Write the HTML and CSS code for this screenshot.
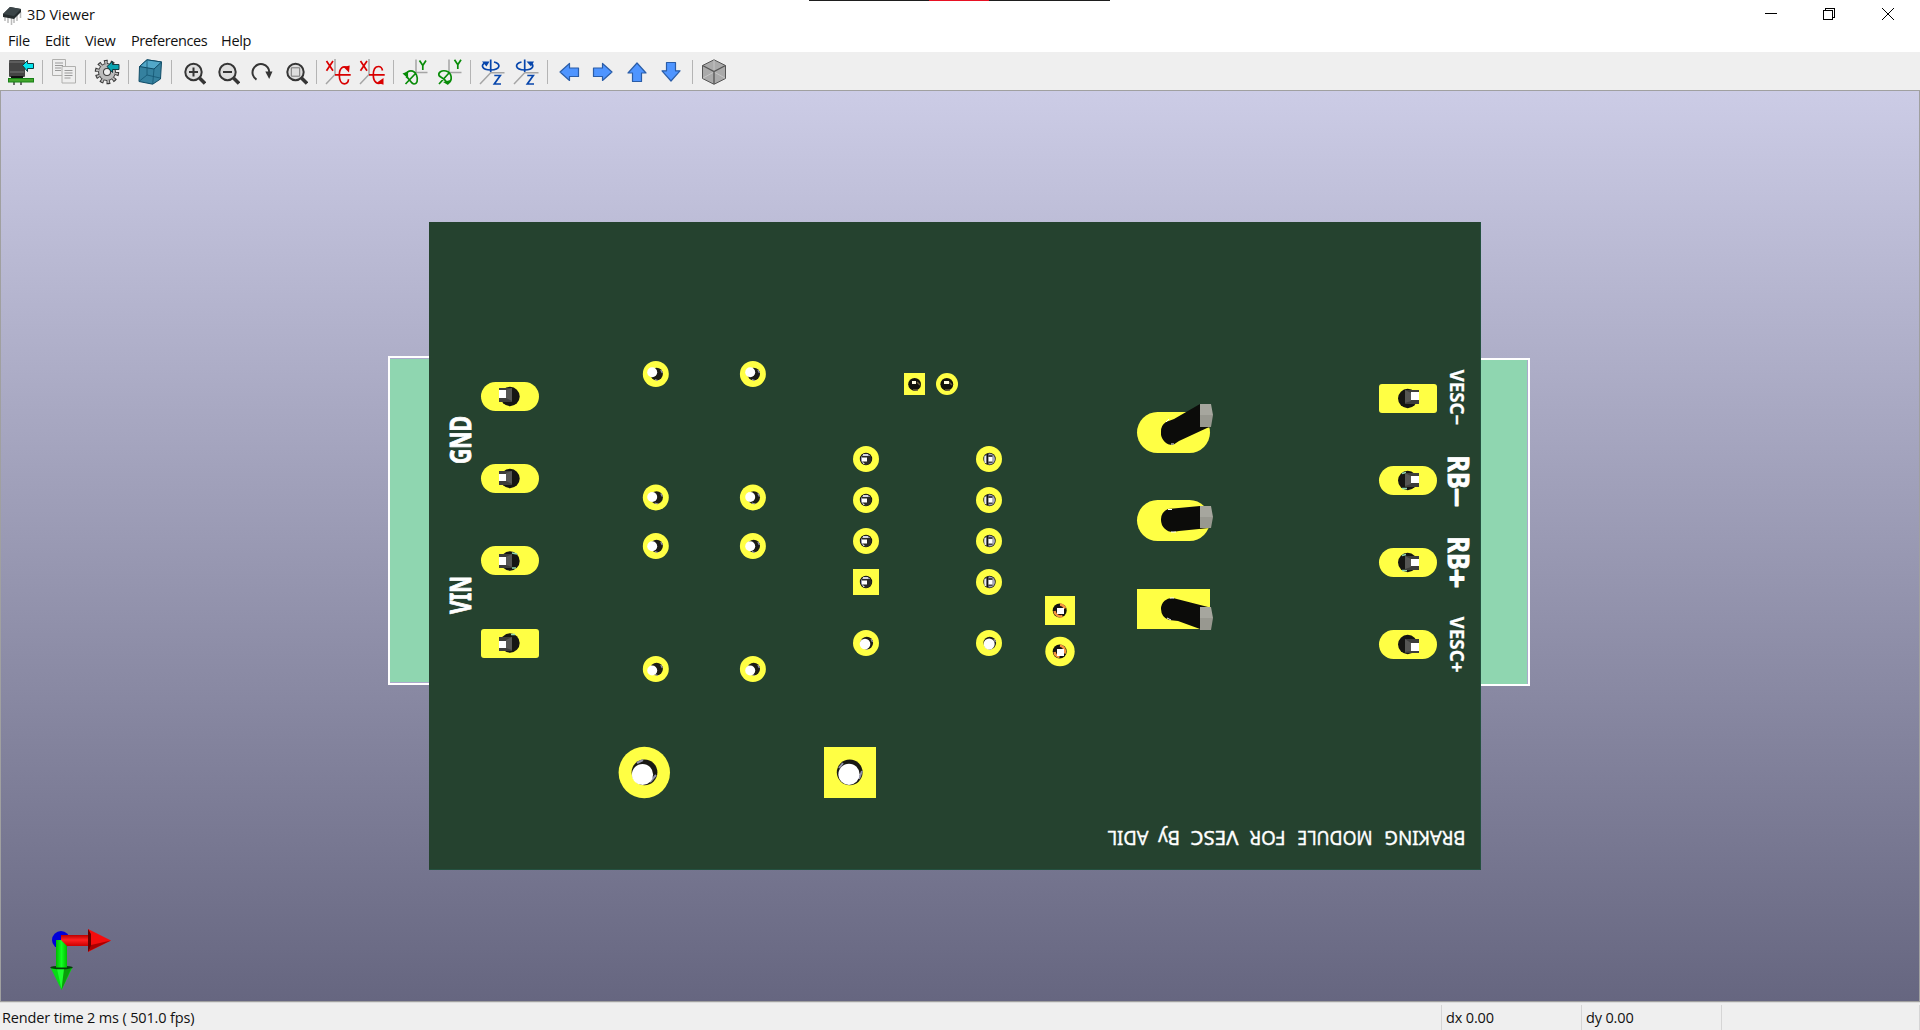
FILE: index.html
```
<!DOCTYPE html>
<html lang="en">
<head>
<meta charset="utf-8">
<title>3D Viewer</title>
<link rel="stylesheet" href="styles.css">
</head>
<body>
<div class="window">
  <div class="capture-bar"></div>
  <header class="titlebar">
    <svg class="app-icon" width="20" height="20" viewBox="0 0 20 20">
      <path d="M3 11v5M6 12v6M9.500 13v7M12 13v5M15 10v6M18.500 7v6" stroke="#bbb" stroke-width="1.500"/>
      <path d="M1 9L8 2L19 4V7L12 14L1 12Z" fill="#252c2e"/>
      <path d="M1 9L8 2L19 4L12 11Z" fill="#3b4548"/>
    </svg>
    <span class="title">3D Viewer</span>
    <svg class="caption-buttons" width="132" height="14" viewBox="0 0 132 14" shape-rendering="crispEdges">
      <path d="M1 6.500h12M59.500 3.500h9v9h-9zM61.500 3V1.500h9v9H69" fill="none" stroke="#000"/>
      <path d="M118 1l12 12M130 1l-12 12" stroke="#000" shape-rendering="auto"/>
    </svg>
  </header>
  <nav class="menubar"><span class="file">File</span><span class="edit">Edit</span><span class="view">View</span><span class="prefs">Preferences</span><span>Help</span></nav>
  <div class="toolbar">
    <div class="tool"><svg viewBox="0 0 26 26"><path d="M6 22v4M13 22v4" stroke="#444" stroke-width="1.500"/><rect x="1" y="1" width="16" height="17" rx="1" fill="#444"/><path d="M1 3h16M2 13h14" stroke="#777"/><path d="M3 18h12" stroke="#111" stroke-width="2"/><rect x=".5" y="19.500" width="25" height="3.500" fill="#43a52c" stroke="#178017"/><path d="M14.500 6.500l5-5v3h6v5h-6v3z" fill="#06e5ee" stroke="#103b40"/></svg></div>
    <i class="sep"></i>
    <div class="tool"><svg viewBox="0 0 26 26"><g fill="#eee" stroke="#b0b0ae"><path d="M1.500.5h13v16h-13z"/><path d="M11 7.500h13.500v16.500H11z"/></g><path d="M4 4h8M4 6.500h8M4 9h6M4 11.500h6M13.500 11.500h8M13.500 14h8M13.500 16.500h8M13.500 19h6" stroke="#999" stroke-width="1.200"/></svg></div>
    <i class="sep"></i>
    <div class="tool"><svg viewBox="0 0 26 26"><circle cx="13" cy="13" r="10.200" fill="none" stroke="#3a3a3a" stroke-width="4" stroke-dasharray="3.600 2.809"/><circle cx="13" cy="13" r="6" fill="none" stroke="#3a3a3a" stroke-width="6"/><circle cx="13" cy="13" r="6" fill="none" stroke="#bbb" stroke-width="4"/><circle cx="13" cy="13" r="9.500" fill="none" stroke="#bbb" stroke-width="3.200" stroke-dasharray="1.700 4.269" stroke-dashoffset="-.8"/><path d="M13 7.500l5.500-5v3H25v5h-6.500v3z" fill="#08a3b0" stroke="#123b42"/></svg></div>
    <i class="sep"></i>
    <div class="tool"><svg viewBox="0 0 26 26"><path d="M10 .8L24.500 3L23.500 20L15.700 25.200L2 22.500L2.500 7.500Z" fill="#35819f" stroke="#104b66"/><path d="M10 .8L24.500 3L17 10L2.500 7.500Z" fill="#52a7c8" stroke="#104b66"/><path d="M17 10l-1.300 15M10 1v15L2.500 22M10 16l13 3" fill="none" stroke="#145572" stroke-width=".8"/></svg></div>
    <i class="sep"></i>
    <div class="tool"><svg viewBox="0 0 26 26"><circle cx="13.500" cy="13" r="8.200" class="lens"/><path d="M19.500 19l5.500 5.500" class="handle"/><path d="M9 13h9M13.500 8.500v9" class="mark"/></svg></div>
    <div class="tool"><svg viewBox="0 0 26 26"><circle cx="13.500" cy="13" r="8.200" class="lens"/><path d="M19.500 19l5.500 5.500" class="handle"/><path d="M9 13h9" class="mark"/></svg></div>
    <div class="tool"><svg viewBox="0 0 26 26"><path d="M8.500 20.600A8.400 8.400 0 1 1 21.300 14" class="lens"/><path d="M17.300 12.500h7.200l-3.300 7.500z" fill="#353535"/></svg></div>
    <div class="tool"><svg viewBox="0 0 26 26"><circle cx="13.500" cy="13" r="8.200" class="lens"/><path d="M19.500 19l5.500 5.500" class="handle"/><path d="M9.300 8.800h8.400v8.400H9.300z" fill="#ddd" stroke="#777"/></svg></div>
    <i class="sep"></i>
    <div class="tool"><svg viewBox="0 0 26 26"><path d="M10 0v15.500L1 25" class="axis"/><g class="red"><path d="M1.500 2l6.500 9.800M8 2L1.500 11.800M10 15.800H25.700M22.500 9C18 6 14.300 9.500 14.300 16c0 6 2.200 8.800 5 8.800 2.700 0 4-1.800 4.200-4.500"/><path d="M18.500 8l6.200-1.500-.7 7z" fill="#d90000" stroke="none"/></g></svg></div>
    <div class="tool"><svg viewBox="0 0 26 26"><path d="M10 0v15.500L1 25" class="axis"/><g class="red"><path d="M1.500 2l6.500 9.800M8 2L1.500 11.800M10 15.800H25.700M23.500 11.500C23 8.800 21.500 7.500 19.500 7.500c-3 0-5.200 3-5.200 8.500 0 7 4 9.800 8.200 7.500"/><path d="M18 23.500l6.500-4.500v6.700z" fill="#d90000" stroke="none"/></g></svg></div>
    <i class="sep"></i>
    <div class="tool"><svg viewBox="0 0 26 26"><path d="M14 .5v13h11.500" class="axis"/><g class="green"><path d="M17.500 1.500l3.300 5 3.200-5M20.800 6.500V11M3.500 25L14 14M3 16C6 10.500 12 10.500 14.500 16c2 5 .5 9-2.500 9-3 0-4-5-8-7.500"/><path d="M.5 14.500l5.500-2 .2 7z" fill="#088c08" stroke="none"/></g></svg></div>
    <div class="tool"><svg viewBox="0 0 26 26"><path d="M13 .5v13h12.500" class="axis"/><g class="green"><path d="M18.500.8l3.300 5 3.200-5M21.800 5.800V10M3 25L13 14M12 24.500c5-3 4-11-2-12.500-4.500-1-8 1.500-7 4.500 1 2 4.500 1.500 8 7"/><path d="M7 23l7.500-2-2.500 5z" fill="#088c08" stroke="none"/></g></svg></div>
    <i class="sep"></i>
    <div class="tool"><svg viewBox="0 0 26 26"><path d="M1 25L11.700 13.700H25.500" class="axis"/><g class="blue"><path d="M11.700.5v12.500M15 3c7.500 1.500 6.500 7.800-3.300 8C2.500 11 1.500 6 6.500 3.500M15.300 16.500h6l-6 8.500h6.700"/><path d="M3 2.500h7.500L7.500 7.500z" fill="#0746ac" stroke="none"/></g></svg></div>
    <div class="tool"><svg viewBox="0 0 26 26"><path d="M1 25L11.700 13.700H25.500" class="axis"/><g class="blue"><path d="M11.700.5v12.500M8.500 3c-7.500 1.500-6.500 7.800 3.200 8C20.500 11 22 6 17 3.500M14.300 16.500h6l-6 8.500h6.700"/><path d="M21 2.500h-7.500l4.500 5z" fill="#0746ac" stroke="none"/></g></svg></div>
    <i class="sep"></i>
    <div class="tool"><svg viewBox="0 0 26 26"><path d="M4 13l9.500-8.500v4.500h9v8.500h-9v4z" class="arrow"/></svg></div>
    <div class="tool"><svg viewBox="0 0 26 26"><path d="M22 13l-9.500-8.500v4.500h-9v8.500h9v4z" class="arrow"/></svg></div>
    <div class="tool"><svg viewBox="0 0 26 26"><path d="M13 4l9 10h-4.500v8.500h-9V14H4z" class="arrow"/></svg></div>
    <div class="tool"><svg viewBox="0 0 26 26"><path d="M13 22l9-10.200h-4.500V3.500h-9v8.300H4z" class="arrow"/></svg></div>
    <i class="sep"></i>
    <div class="tool"><svg viewBox="0 0 26 26"><path d="M13 .8l11.500 5.700v13L13 25.300 1.500 19.500v-13z" fill="#aaa" stroke="#555"/><path d="M13 1v12L2 19M13 13l11 6" fill="none" stroke="#c5c5c5"/><path d="M1.500 6.500L13 12.500l11.500-6M13 12.500V25" fill="none" stroke="#555" stroke-width="1.300"/></svg></div>
  </div>
  <main class="canvas">
    <svg class="scene" viewBox="1 91 1918 910">
      <defs>
        <linearGradient id="redShaft" x2="0" y2="1"><stop stop-color="#b00"/><stop offset=".45" stop-color="#f22"/><stop offset="1" stop-color="#c00"/></linearGradient>
        <linearGradient id="greenShaft"><stop stop-color="#0b0"/><stop offset=".5" stop-color="#1f2"/><stop offset="1" stop-color="#0b0"/></linearGradient>
        <g id="ring"><circle r="13" fill="#ffff44"/><circle cx=".8" r="6.300" fill="#1c1c16"/><path d="M-1 5.500l3 1M5 -4l1.500 3" stroke="#8f8fa8" stroke-width="1.300"/></g>
        <g id="dipHoleA"><circle r="6.200" fill="#111"/><circle r="5.200" fill="#9b9bb4"/><path d="M-3 -5h5v10h-5z" fill="#d5d5e0"/><path d="M-4-3h9v6l-2 2h-4l-3-3z" fill="#2a2a28"/><path d="M-4-1.500h5v4H-4z" fill="#fff"/></g>
        <g id="dipHoleB"><circle r="6.200" fill="#111"/><circle r="5.500" fill="#a5a5bd"/><path d="M-5-3h2v7h-2z" fill="#eee"/><path d="M-3-5h2v10h-2z" fill="#111"/><path d="M-1-4h4v8h-4z" fill="#444"/><path d="M-1-2h4v4.500h-4z" fill="#fff"/></g>
      </defs>
      <g class="connectors" shape-rendering="crispEdges">
        <rect x="389" y="357" width="60" height="327"/>
        <rect x="1460" y="359" width="69" height="326"/>
        <path d="M390 358.500h40M390 682.500h40M1527.500 360v324" stroke="#aaaacb" stroke-width="1"/>
      </g>
      <rect x="429" y="222" width="1052" height="648" fill="#25422f"/>
      <path d="M429 869.500h1051.500V222" fill="none" stroke="#24503f"/>

      <g class="pads">
        <rect x="481" y="382" width="58" height="29" rx="14.500"/><rect x="481" y="464" width="58" height="29" rx="14.500"/><rect x="481" y="546" width="58" height="29" rx="14.500"/><rect x="481" y="629" width="58" height="29" rx="3"/>
        <rect x="1379" y="384" width="58" height="29" rx="3"/><rect x="1379" y="466" width="58" height="29" rx="14.500"/><rect x="1379" y="548" width="58" height="29" rx="14.500"/><rect x="1379" y="630" width="58" height="29" rx="14.500"/>
      </g>
      <g fill="#151513"><circle cx="510" cy="396.500" r="9.700"/><circle cx="510" cy="478.500" r="9.700"/><circle cx="510" cy="561" r="9.700"/><circle cx="510" cy="643" r="9.700"/><circle cx="1407.700" cy="398.500" r="9.700"/><circle cx="1407.700" cy="480.500" r="9.700"/><circle cx="1407.700" cy="562.500" r="9.700"/><circle cx="1407.700" cy="644.500" r="9.700"/></g>
      <path d="M512 553l5 1M512 568l4 0M511 634.500h4M1402 473.500l4-1M1402 488.500h5M1402 555.500l4-1M1402 570.500h5" stroke="#8fd6b0" stroke-width="1.600"/>
      <path d="M499 388h13v14h-13zM499 471h13v14h-13zM499 554h13v14h-13zM499 637h13v14h-13zM1405 390h14v14h-14zM1405 473h14v14h-14zM1405 556h14v14h-14zM1405 639h14v14h-14z" fill="#3d3d3b"/>
      <path d="M506 390l6-2v13l-6-3zM506 473l6-2v13l-6-3zM506 557l6-3v13l-6-2zM506 640l6-3v13l-6-2zM1405 390l6 3v8l-6 2zM1405 473l6 3v8l-6 2zM1405 556l6 3v8l-6 2zM1405 639l6 4v8l-6 1z" fill="#565654"/>
      <path d="M499 390h7v8h-7zM499 474h7v7h-7zM499 557h7v8h-7zM499 641h7v7h-7zM1411 392h8v8h-8zM1411 476h8v7h-8zM1411 559h8v7h-8zM1411 643h8v8h-8z" fill="#fff"/>

      <g><use href="#ring" x="655.800" y="374"/><use href="#ring" x="752.900" y="374"/><use href="#ring" x="655.800" y="497.500"/><use href="#ring" x="752.900" y="497.500"/><use href="#ring" x="655.800" y="546"/><use href="#ring" x="752.900" y="546"/><use href="#ring" x="655.800" y="669"/><use href="#ring" x="752.900" y="669"/><use href="#ring" x="866" y="643"/><use href="#ring" x="989" y="643"/></g>
      <g fill="#fff"><circle cx="652.200" cy="372.300" r="5"/><circle cx="750.200" cy="372.300" r="5"/><circle cx="652.200" cy="497" r="5"/><circle cx="750.200" cy="497" r="5"/><circle cx="652.200" cy="546.200" r="5"/><circle cx="750.200" cy="546.200" r="5"/><circle cx="652.200" cy="670.500" r="5"/><circle cx="750.200" cy="670.500" r="5"/><circle cx="865" cy="644" r="5.300"/><circle cx="989.200" cy="644" r="5.500"/></g>

      <g class="pads"><circle cx="866" cy="459" r="13"/><circle cx="866" cy="500" r="13"/><circle cx="866" cy="541" r="13"/><rect x="853" y="569" width="26" height="26"/><circle cx="989" cy="459" r="13"/><circle cx="989" cy="500" r="13"/><circle cx="989" cy="541" r="13"/><circle cx="989" cy="582" r="13"/><rect x="904" y="373" width="21" height="22"/><circle cx="947" cy="384" r="11"/><rect x="1045" y="596" width="30" height="29"/><circle cx="1060" cy="651.500" r="14.700"/></g>
      <use href="#dipHoleA" x="866" y="459"/><use href="#dipHoleA" x="866" y="500"/><use href="#dipHoleA" x="866" y="541"/><use href="#dipHoleA" x="866" y="582"/><use href="#dipHoleB" x="989.500" y="459"/><use href="#dipHoleB" x="989.500" y="500"/><use href="#dipHoleB" x="989.500" y="541"/><use href="#dipHoleB" x="989.500" y="582"/>
      <circle cx="914.600" cy="384.300" r="6.400" fill="#12110c"/><circle cx="946.800" cy="384.300" r="6.400" fill="#12110c"/>
      <path d="M917 382l3 3M949 382l3 3M913 390h5M945 390h5" stroke="#665a3a" stroke-width="1.500"/>
      <path d="M912 381h4v3h-4zM944 381h5v3h-5z" fill="#fffbe0"/>
      <circle cx="1059.700" cy="610.500" r="7" fill="#111"/><circle cx="1059.700" cy="651.500" r="7" fill="#111"/>
      <path d="M1060 604.500a6 6 0 0 1 5 4M1054.500 611a6 6 0 0 0 8 5M1060 645.500a6 6 0 0 1 4.500 8M1054.500 652a6 6 0 0 0 5 5" fill="none" stroke="#f79440" stroke-width="2.500"/>
      <path d="M1057 608h7v6h-7zM1057 649h7v7h-7z" fill="#fff"/>

      <g class="pads"><rect x="1137" y="412" width="73" height="41" rx="20.500"/><rect x="1137" y="500" width="73" height="41" rx="20.500"/><rect x="1137" y="589" width="73" height="40"/><circle cx="644.300" cy="772.500" r="25.700"/><rect x="824" y="747" width="52" height="51"/></g>
      <g fill="#0c0c0a"><path d="M1161 432a11 11 0 0 1 5-10l8-3 26-15h10v23l-3 1-28 13-6 4a12 12 0 0 1-12-13z"/><path d="M1161 520a11 11 0 0 1 7-11l32-3h9v22l-30 3-6 1a12 12 0 0 1-12-12z"/><path d="M1161 609a11 11 0 0 1 12-11l35 9v22h-8l-22-8-9-1a12 12 0 0 1-8-11z"/></g>
      <path d="M1166 422l3-3M1171 444h3M1168 509.500h4M1171 532h5M1170 598h4M1167 618l4 2" stroke="#fff"/>
      <path d="M1200 404h11l2 11h-13zM1200 506h11l2 11h-13zM1200 607h11l2 11h-13z" fill="#a6a69e"/>
      <path d="M1200 415h13l-2 12h-11zM1200 517h13l-2 11h-11zM1200 618h13l-2 12h-11z" fill="#989890"/>
      <circle cx="644.500" cy="772.300" r="12.900" fill="#191813"/><path d="M637 763l6-3M650 782l6-7" stroke="#8f8fa8" stroke-width="2"/><circle cx="642.500" cy="774.500" r="10.600" fill="#fff"/>
      <circle cx="849.700" cy="772.300" r="12.900" fill="#191813"/><path d="M839 768l4-5M859 779l3-8" stroke="#8f8fa8" stroke-width="2"/><circle cx="849" cy="774.300" r="10.600" fill="#fff"/>

      <g class="silk heavy">
        <text transform="translate(471 464) rotate(-90)" textLength="48" lengthAdjust="spacingAndGlyphs">GND</text>
        <text transform="translate(471 614) rotate(-90)" textLength="38" lengthAdjust="spacingAndGlyphs">VIN</text>
        <text transform="translate(1448 455.500) rotate(90)" textLength="33" lengthAdjust="spacingAndGlyphs">RB</text>
        <text transform="translate(1448 536.500) rotate(90)" textLength="33" lengthAdjust="spacingAndGlyphs">RB</text>
        <text transform="translate(1447 487.500) rotate(90)" textLength="20" lengthAdjust="spacingAndGlyphs">−</text>
        <text transform="translate(1447 568.500) rotate(90)" textLength="20" lengthAdjust="spacingAndGlyphs">+</text>
      </g>
      <g class="silk medium">
        <text transform="translate(1450 369.500) rotate(90)" textLength="56" lengthAdjust="spacingAndGlyphs">VESC−</text>
        <text transform="translate(1450 616.500) rotate(90)" textLength="56" lengthAdjust="spacingAndGlyphs">VESC+</text>
      </g>
      <g class="silk light" transform="translate(1465.500 830.700) rotate(180)">
        <text textLength="81" lengthAdjust="spacingAndGlyphs">BRAKING</text>
        <text x="93" textLength="75" lengthAdjust="spacingAndGlyphs">MODULE</text>
        <text x="180" textLength="36" lengthAdjust="spacingAndGlyphs">FOR</text>
        <text x="227" textLength="48" lengthAdjust="spacingAndGlyphs">VESC</text>
        <text x="285.500" textLength="22" lengthAdjust="spacingAndGlyphs">By</text>
        <text x="317" textLength="41" lengthAdjust="spacingAndGlyphs">ADIL</text>
      </g>

      <circle cx="61" cy="940" r="9" fill="#0000d8"/>
      <rect x="61" y="935" width="28" height="11" fill="url(#redShaft)"/>
      <path d="M88 929l23 11.500L88 952z" fill="#f40c0c"/><path d="M88 929l3 5v13l-3 5z" fill="#600"/><path d="M91 945l20-4.500L89 951z" fill="#a00"/>
      <path d="M56 940h5l6 6v22H56z" fill="url(#greenShaft)"/>
      <path d="M50.500 967.500h22L61.500 990z" fill="#07dd15"/><path d="M62 969h9l-9.500 21z" fill="#0a9e0a"/><path d="M57 969h7l-2.500 20z" fill="#1fff2f"/><ellipse cx="61.500" cy="967.500" rx="11.300" ry="1.700" fill="#043d08"/><path d="M56 960h11v7.500H56z" fill="url(#greenShaft)"/>
    </svg>
  </main>
  <footer class="statusbar">
    <div class="field main">Render time 2 ms ( 501.0 fps)</div>
    <div class="field">dx 0.00</div>
    <div class="field">dy 0.00</div>
    <div class="field last"></div>
  </footer>
</div>
</body>
</html>
```
FILE: styles.css
```
* { box-sizing: border-box; }
body { margin: 0; background: #fff; color: #111; font-family: "Open Sans", "Noto Sans", sans-serif; font-size: 14.500px; letter-spacing: -.4px; }
.window { position: relative; display: flex; flex-direction: column; width: 100vw; height: 100vh; overflow: hidden; }
.capture-bar { position: absolute; left: 809px; top: 0; width: 301px; height: 1px; background: linear-gradient(90deg, #1e1e1e 120px, #e81123 120px 180px, #1e1e1e 180px); }
.titlebar { display: flex; height: 29px; padding-left: 2px; align-items: center; }
.app-icon { margin-right: 5px; }
.title { line-height: 28px; letter-spacing: -.05px; }
.caption-buttons { margin: -1px 24px 0 auto; }
.menubar { display: flex; height: 23px; padding-left: 7px; line-height: 24px; letter-spacing: -.3px; }
.file { width: 37px; }
.edit { width: 40px; }
.view { width: 46px; }
.prefs { width: 90px; letter-spacing: -.4px; }

.toolbar { display: flex; align-items: center; height: 38px; padding: 2px 0 0 4px; background: #efefef; }
.tool { width: 34px; height: 26px; padding-left: 4px; }
.tool svg { display: block; width: 26px; height: 26px; }
.sep { width: 1px; height: 24px; margin: 0 4px; background: #b4b4b4; }
.lens { fill: none; stroke: #353535; stroke-width: 2; }
circle.lens { fill: #dedede; }
.handle { stroke: #353535; stroke-width: 3.500; }
.mark { stroke: #353535; stroke-width: 2; }
.axis { fill: none; stroke: #a5a5a5; stroke-width: 1.500; }
.red, .green, .blue { fill: none; stroke-width: 1.700; }
.red { stroke: #d90000; }
.green { stroke: #088c08; }
.blue { stroke: #0746ac; }
.arrow { fill: #4f95ff; stroke: #2a5da8; stroke-width: 1.200; stroke-linejoin: round; }

.menubar, .titlebar { padding-right: 0; }
.menubar { padding-left: 8px; }

.canvas { flex: 1; min-height: 0; border: 1px solid #a0a0a0; background: linear-gradient(#cccce6, #666680); }
.scene { display: block; width: 100%; height: 100%; }
.connectors { fill: #8fd6b0; stroke: #fff; stroke-width: 2; }
.pads { fill: #ffff44; }
.silk { fill: #fff; stroke: #fff; stroke-linejoin: round; font-family: "Noto Sans", sans-serif; letter-spacing: 0; }
.heavy { font-size: 28px; font-weight: 700; stroke-width: .9px; }
.medium { font-size: 19.500px; font-weight: 700; stroke-width: .2px; }
.light { font-size: 20.500px; font-weight: 400; stroke-width: .4px; }

.statusbar { display: flex; height: 28px; padding-top: 2px; background: #efefef; border-top: 1px solid #dcdcdc; letter-spacing: -.15px; }
.field { width: 140px; padding-left: 4px; line-height: 26px; border-left: 1px solid #d5d5d5; }
.field.main { width: 1441px; padding-left: 2px; border-left: 0; }
.field.last { flex: 1; border-right: 1px solid #d5d5d5; }
```
